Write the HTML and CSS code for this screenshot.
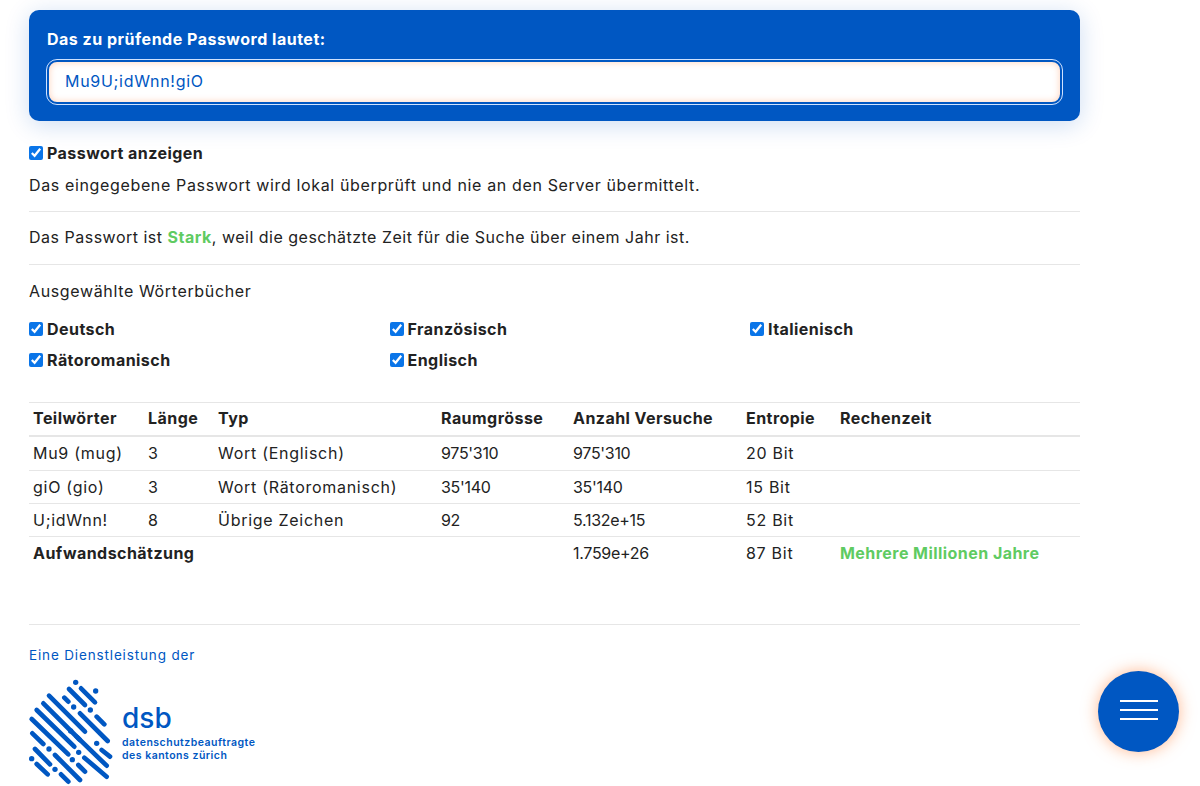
FILE: index.html
```html
<!DOCTYPE html>
<html lang="de">
<head>
    <meta charset="UTF-8">
    <title>Passwort-Check</title>
    <link rel="stylesheet" href="styles.css">
</head>
<body>
    <div class="container">
        <div class="password-box">
            <label class="password-label" for="password">Das zu prüfende Password lautet:</label>
            <input class="password-input" id="password" type="text" value="Mu9U;idWnn!giO">
        </div>

        <label class="check show-password"><input type="checkbox" checked> Passwort anzeigen</label>
        <p class="note">Das eingegebene Passwort wird lokal überprüft und nie an den Server übermittelt.</p>
        <hr>
        <p class="result">Das Passwort ist <strong class="strong-green">Stark</strong>, weil die geschätzte Zeit für die Suche über einem Jahr ist.</p>
        <hr>

        <p class="dict-title">Ausgewählte Wörterbücher</p>
        <div class="dict-grid">
            <label class="check"><input type="checkbox" checked> Deutsch</label>
            <label class="check"><input type="checkbox" checked> Französisch</label>
            <label class="check"><input type="checkbox" checked> Italienisch</label>
            <label class="check"><input type="checkbox" checked> Rätoromanisch</label>
            <label class="check"><input type="checkbox" checked> Englisch</label>
        </div>

        <table class="words">
            <colgroup>
                <col class="col-word">
                <col class="col-length">
                <col class="col-type">
                <col class="col-space">
                <col class="col-tries">
                <col class="col-entropy">
                <col>
            </colgroup>
            <thead>
                <tr>
                    <th>Teilwörter</th>
                    <th>Länge</th>
                    <th>Typ</th>
                    <th>Raumgrösse</th>
                    <th>Anzahl Versuche</th>
                    <th>Entropie</th>
                    <th>Rechenzeit</th>
                </tr>
            </thead>
            <tbody>
                <tr>
                    <td>Mu9 (mug)</td>
                    <td>3</td>
                    <td>Wort (Englisch)</td>
                    <td class="num">975'310</td>
                    <td class="num">975'310</td>
                    <td>20 Bit</td>
                    <td></td>
                </tr>
                <tr>
                    <td>giO (gio)</td>
                    <td>3</td>
                    <td>Wort (Rätoromanisch)</td>
                    <td class="num">35'140</td>
                    <td class="num">35'140</td>
                    <td>15 Bit</td>
                    <td></td>
                </tr>
                <tr>
                    <td>U;idWnn!</td>
                    <td>8</td>
                    <td>Übrige Zeichen</td>
                    <td class="num">92</td>
                    <td class="num">5.132e+15</td>
                    <td>52 Bit</td>
                    <td></td>
                </tr>
                <tr class="total">
                    <td colspan="4"><strong>Aufwandschätzung</strong></td>
                    <td class="num">1.759e+26</td>
                    <td>87 Bit</td>
                    <td><strong class="strong-green">Mehrere Millionen Jahre</strong></td>
                </tr>
            </tbody>
        </table>

        <footer>
            <p class="service">Eine Dienstleistung der</p>
            <div class="logo">
                <svg class="logo-mark" viewBox="0 0 270 333" width="90" height="111">
                    <g stroke="#0057c2" stroke-width="14" stroke-linecap="round" fill="none">
                        <path d="M132 42L180 90M168 40L210 82M72 62L180 170M55 85L165 195M35 105L148 215M20 132L130 238"/>
                        <path d="M165 115L248 198M215 125L238 148M22 175L55 207M155 185L245 272M230 225L255 245"/>
                        <path d="M30 222L75 268M90 240L165 315M178 248L245 305M35 267L68 298M160 270L180 290M108 298L130 320M118 68L130 80"/>
                    </g>
                    <g fill="#0057c2">
                        <circle cx="152" cy="22" r="8"/>
                        <circle cx="212" cy="48" r="8"/>
                        <circle cx="146" cy="96" r="8"/>
                        <circle cx="196" cy="105" r="8"/>
                        <circle cx="137" cy="168" r="8"/>
                        <circle cx="215" cy="205" r="8"/>
                        <circle cx="72" cy="222" r="8"/>
                        <circle cx="161" cy="232" r="8"/>
                        <circle cx="20" cy="251" r="8"/>
                        <circle cx="142" cy="254" r="8"/>
                        <circle cx="90" cy="283" r="8"/>
                    </g>
                </svg>
                <div class="logo-text">
                    <div class="logo-name">dsb</div>
                    <div class="logo-sub">datenschutzbeauftragte<br>des kantons zürich</div>
                </div>
            </div>
        </footer>
    </div>

    <button class="menu-button" aria-label="Menü">
        <span></span>
        <span></span>
        <span></span>
    </button>
</body>
</html>
```

FILE: styles.css
```css
:root {
    --primary-color: #0057c2;
    --green: #5fcb62;
    --line: #e6e6e6;
    --text: #222;
}

body {
    margin: 0;
    background-color: #fff;
    color: var(--text);
    font-family: Inter, Arial, sans-serif;
    font-size: 16px;
    letter-spacing: 0.64px;
    line-height: 22px;
}

.container {
    width: 1051px;
    padding: 10px 0 0 29px;
}

.password-box {
    background-color: var(--primary-color);
    border-radius: 10px;
    padding: 18px 18px 17px;
    box-shadow: 0 4px 24px rgba(0, 87, 194, 0.2);
}

.password-label {
    display: block;
    color: #fff;
    font-weight: 700;
    letter-spacing: 0.5px;
    margin-bottom: 10px;
}

.password-input {
    display: block;
    box-sizing: border-box;
    width: 100%;
    height: 44px;
    padding: 0 16px 2px;
    border: 2px solid var(--primary-color);
    border-radius: 10px;
    outline: 1px solid #cfe2ff;
    background-color: #fff;
    box-shadow: inset 0 0 7px rgba(255, 140, 80, 0.4);
    color: var(--primary-color);
    font: inherit;
    letter-spacing: 0.7px;
}

.check {
    display: flex;
    align-items: center;
    gap: 4px;
    font-weight: 700;
    letter-spacing: 0.45px;
}

.check input {
    width: 14px;
    height: 14px;
    margin: 0;
    accent-color: #0a75e8;
}

.show-password {
    margin-top: 21px;
}

.note {
    margin: 10px 0 15px;
}

hr {
    border: none;
    border-top: 1px solid var(--line);
    margin: 0;
}

.result {
    margin: 14px 0 16px;
    letter-spacing: 0.5px;
}

.strong-green {
    color: var(--green);
}

.dict-title {
    margin: 15px 0 16px;
}

.dict-grid {
    display: grid;
    grid-template-columns: repeat(3, 360.5px);
    row-gap: 9px;
}

.words {
    width: 100%;
    margin-top: 31px;
    border-collapse: collapse;
    table-layout: fixed;
}

.col-word { width: 115px; }
.col-length { width: 70px; }
.col-type { width: 223px; }
.col-space { width: 132px; }
.col-tries { width: 173px; }
.col-entropy { width: 94px; }

.words th,
.words td {
    padding: 5px 4px 5.33px;
    text-align: left;
    letter-spacing: 0.72px;
}

.words .num {
    letter-spacing: -0.3px;
}

.words strong {
    letter-spacing: 0.45px;
}

.words th {
    padding: 4px 4px 6.33px;
    border-top: 1px solid var(--line);
    border-bottom: 2px solid var(--line);
    letter-spacing: 0.45px;
}

.words tbody td {
    border-bottom: 1px solid var(--line);
}

.words .total td {
    border-bottom: none;
}

footer {
    margin-top: 54px;
    padding-top: 19px;
    border-top: 1px solid var(--line);
}

.service {
    margin: 0 0 9px;
    color: var(--primary-color);
    font-size: 13.5px;
    letter-spacing: 0.85px;
}

.logo {
    display: flex;
    align-items: center;
    gap: 7px;
    color: var(--primary-color);
}

.logo-mark {
    margin-left: -4px;
}

.logo-name {
    margin-top: 2px;
    font-size: 28px;
    line-height: 34px;
    font-weight: 500;
    letter-spacing: 0;
}

.logo-sub {
    margin-top: 1px;
    font-size: 10.5px;
    line-height: 13px;
    font-weight: 600;
    letter-spacing: 0.5px;
}

.menu-button {
    position: fixed;
    left: 1098px;
    top: 671px;
    width: 81px;
    height: 81px;
    border: none;
    border-radius: 50%;
    background-color: var(--primary-color);
    box-shadow: 0 0 16px rgba(255, 125, 55, 0.55);
    display: flex;
    flex-direction: column;
    align-items: center;
    justify-content: center;
    gap: 7px;
    padding: 0 0 4px;
}

.menu-button span {
    display: block;
    width: 38px;
    height: 2px;
    background-color: #fff;
}
```
